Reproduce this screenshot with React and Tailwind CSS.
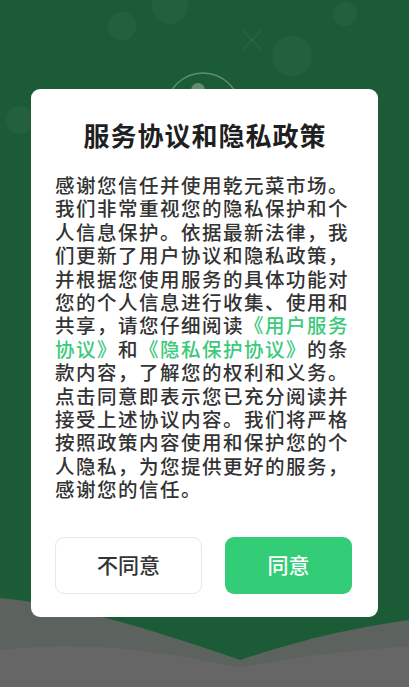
import React from 'react'

const CJK = { fontFamily: '"Noto Sans CJK SC", "Noto Sans", sans-serif' }

// ── Background art ───────────────────────────────────────────
function Backdrop() {
  return (
    <svg className="absolute inset-0" width="409" height="687" viewBox="0 0 409 687">
      <g fill="#ffffff" fillOpacity="0.04">
        <circle cx="170" cy="6" r="18" />
        <circle cx="122" cy="26" r="14" />
        <circle cx="292" cy="56" r="20" />
        <circle cx="345" cy="14" r="12" />
        <circle cx="20" cy="120" r="14" />
      </g>
      <g stroke="#ffffff" strokeOpacity="0.06" strokeWidth="1.5">
        <line x1="242" y1="30" x2="262" y2="50" />
        <line x1="262" y1="30" x2="242" y2="50" />
      </g>
      <circle cx="203" cy="110" r="37" fill="none" stroke="#ffffff" strokeOpacity="0.3" strokeWidth="1.5" />
      <circle cx="198" cy="90" r="7" fill="#ffffff" fillOpacity="0.3" />
      <path d="M0 598 C 60 603, 140 625, 240 660 C 300 640, 350 628, 409 620 L409 687 L0 687 Z" fill="#5c625e" />
      <path d="M0 650 C 80 640, 160 650, 240 668 C 300 655, 360 650, 409 646 L409 687 L0 687 Z" fill="#656665" />
    </svg>
  )
}

const LINK = 'inline-block leading-[23.4px] text-[#3cc97c]'

export default function App() {
  return (
    <div className="relative h-[687px] w-[409px] overflow-hidden bg-[#1b5b35]" style={CJK}>
      <Backdrop />

      <div className="relative mx-[31px] mt-[89px] h-[528px] rounded-[9px] bg-white px-[24px] pt-[30px]">
        <h1 className="pl-[1px] text-center text-[26px] font-bold leading-[32px] tracking-[1px] text-[#1f1f1f]">
          服务协议和隐私政策
        </h1>

        <p className="mt-[22px] w-[298px] text-[19.5px] font-medium leading-[23.4px] tracking-[1.5px] text-[#333333]">
          感谢您信任并使用乾元菜市场。我们非常重视您的隐私保护和个人信息保护。依据最新法律，我们更新了用户协议和隐私政策，并根据您使用服务的具体功能对您的个人信息进行收集、使用和共享，请您仔细阅读
          <span className={LINK}>《用户服务</span>
          <br />
          <span className={LINK}>协议》</span>和<span className={LINK}>《隐私保护协议》</span>的条
          <br />
          款内容，了解您的权利和义务。点击同意即表示您已充分阅读并接受上述协议内容。我们将严格按照政策内容使用和保护您的个人隐私，为您提供更好的服务，感谢您的信任。
        </p>

        <div className="mt-[36px] flex gap-[23px]">
          <button className="h-[57px] w-[147px] rounded-[9px] border border-[#e6e6e6] bg-white text-[21px] font-medium text-[#333333]">
            不同意
          </button>
          <button className="h-[57px] w-[127px] rounded-[9px] bg-[#33cd77] text-[21px] font-medium text-white">
            同意
          </button>
        </div>
      </div>
    </div>
  )
}
